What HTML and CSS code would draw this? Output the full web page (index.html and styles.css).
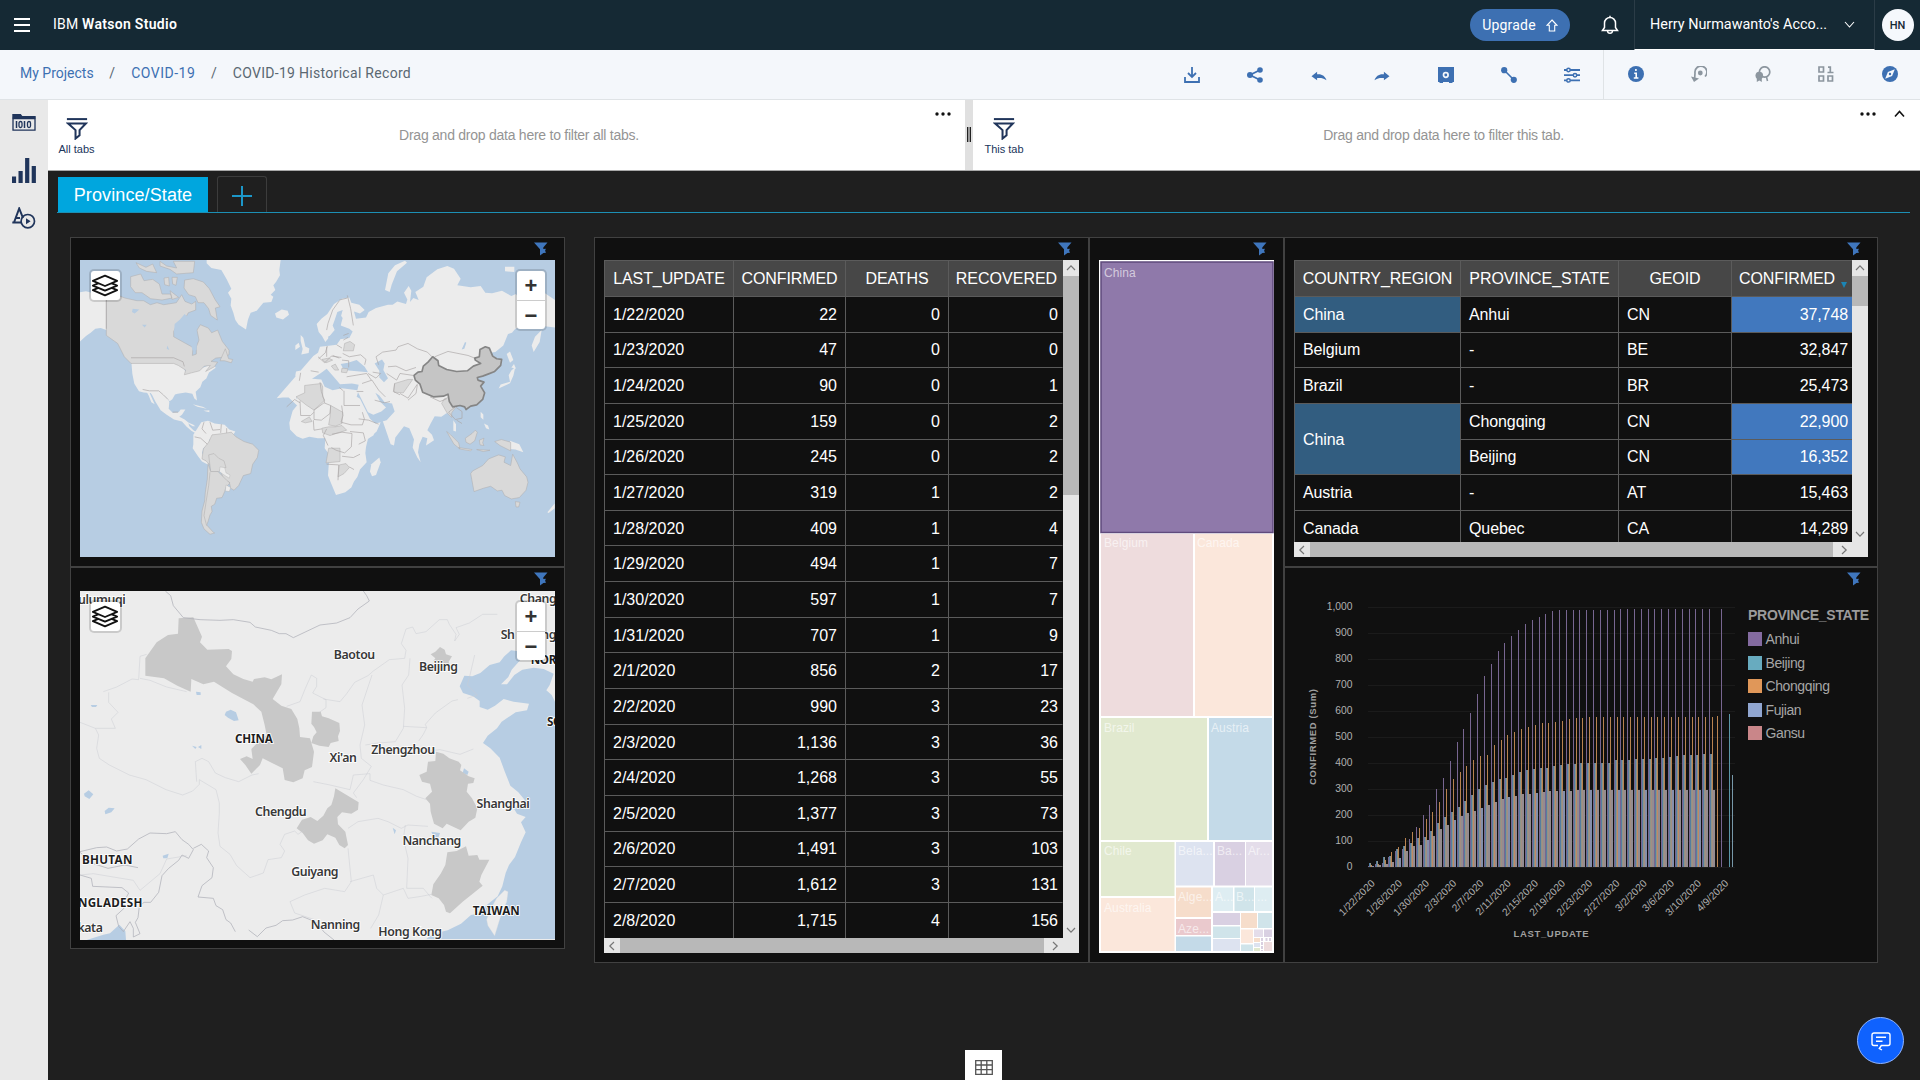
FILE: index.html
```html
<!DOCTYPE html>
<html lang="en">
<head>
<meta charset="utf-8">
<title>IBM Watson Studio</title>
<link rel="stylesheet" href="styles.css">
</head>
<body>
<svg width="0" height="0" class="defs">
  <symbol id="funnel" viewBox="0 0 14 14"><path d="M0 .5h13.5L9.300 5.400v1.600l2.600-.2-.8 2 .9 1.900-2.600.2L6 13.500V7.200Z" fill="currentColor"/></symbol>
  <symbol id="filter" viewBox="0 0 24 24"><path d="M1 1.2h22" stroke="currentColor" stroke-width="2.2"/><path d="M2.4 6h19.2l-6.8 7.2v5.6l-4.4 3.6v-9.2Z" fill="none" stroke="currentColor" stroke-width="2.2"/></symbol>
  <symbol id="layers" viewBox="0 0 30 26"><g fill="#fff" stroke="#111" stroke-width="2" stroke-linejoin="round"><path d="m15 11 13 5.5L15 22 2 16.500Z" transform="translate(0 1)"/><path d="m15 7 13 5.500L15 18 2 12.500Z"/><path d="m15 2 13 5.500L15 13 2 7.500Z"/></g></symbol>
  <symbol id="chev" viewBox="0 0 10 10"><path d="m1 7 4-4.200L9 7" fill="none" stroke="#777" stroke-width="1.200"/></symbol>
</svg>

<header class="top">
  <svg class="burger" viewBox="0 0 16 14"><path d="M0 1h16M0 7h16M0 13h16" stroke="#fff" stroke-width="2"/></svg>
  <div class="brand">IBM <b>Watson Studio</b></div>
  <div class="upgrade"><span>Upgrade</span><svg width="12" height="13" viewBox="0 0 12 13"><path d="m6 1 5 5.300H8.700V12H3.300V6.300H1Z" fill="none" stroke="#fff" stroke-width="1.100"/></svg></div>
  <svg class="bell" width="20" height="21" viewBox="0 0 20 21"><path d="M2.500 15.500 4.500 12.500V8a5.500 5.500 0 0 1 11 0v4.500l2 3Z M10 2.500V.8 M7.500 16c.3 3 4.700 3 5 0" fill="none" stroke="#fff" stroke-width="1.500"/></svg>
  <div class="account"><span>Herry Nurmawanto's Acco...</span><svg width="11" height="8" viewBox="0 0 11 8"><path d="m1 1 4.500 5L10 1" fill="none" stroke="#fff" stroke-width="1.100"/></svg></div>
  <div class="avatar"><span>HN</span></div>
</header>

<nav class="sub">
  <div class="crumbs"><a>My Projects</a><i>/</i><a>COVID-19</a><i>/</i><span>COVID-19 Historical Record</span></div>
  <div class="tools">
    <svg viewBox="0 0 16 16"><path d="M1 10v5h14v-5M8 0v9.500M4 6l4 4 4-4" fill="none" stroke="currentColor" stroke-width="1.800"/></svg>
    <svg viewBox="0 0 16 16"><path d="M13 3 3 8l10 5" fill="none" stroke="currentColor" stroke-width="1.800"/><circle cx="13" cy="3" r="2.800" fill="currentColor"/><circle cx="3" cy="8" r="3" fill="currentColor"/><circle cx="13" cy="13" r="2.800" fill="currentColor"/></svg>
    <svg viewBox="0 0 16 16"><path d="m.5 9.200 5.600-4.400v2.500C11 6.800 14 9 15.500 13.200 12.500 11 10 10.800 6.100 11v2.300Z" fill="currentColor"/></svg>
    <svg viewBox="0 0 16 16"><path d="M15.500 9.200 9.900 4.800v2.500C5 6.800 2 9 .5 13.200c3-2.200 5.500-2.400 9.400-2.200v2.300Z" fill="currentColor"/></svg>
    <svg viewBox="0 0 16 16"><path d="M0 0h16v15h-1.500v1H11v-1H5v1H1.500v-1H0Z" fill="currentColor"/><circle cx="7.800" cy="8" r="2.300" fill="none" stroke="#f4f7fb" stroke-width="1.700"/></svg>
    <svg viewBox="0 0 16 16"><path d="m3 3 10 10" stroke="currentColor" stroke-width="1.600"/><circle cx="3.200" cy="3.200" r="3.100" fill="currentColor"/><circle cx="12.800" cy="12.800" r="3.100" fill="currentColor"/></svg>
    <svg viewBox="0 0 16 16"><path d="M0 3h16M0 8.200h16M0 13.400h16" stroke="currentColor" stroke-width="1.800"/><g fill="#f4f7fb" stroke="currentColor" stroke-width="1.500"><circle cx="4.500" cy="3" r="1.700"/><circle cx="11" cy="8.200" r="1.700"/><circle cx="4.500" cy="13.400" r="1.700"/></g></svg>
  </div>
  <div class="tools right">
    <svg viewBox="0 0 16 16"><circle cx="8" cy="8" r="8" fill="currentColor"/><path d="M7.900 3v2.100M6.200 7.200h2v4.600M5.800 12h4.600" stroke="#fff" stroke-width="1.600" fill="none"/></svg>
    <svg class="off" viewBox="0 0 16 16"><path d="M14 10.500A6 6 0 1 0 4 7c0 3 0 4.500-1 7" fill="none" stroke="currentColor" stroke-width="1.700"/><path d="M0 10.500 3 16l5-3.500Z" fill="currentColor"/><circle cx="9.300" cy="7" r="2.400" fill="currentColor"/></svg>
    <svg class="off" viewBox="0 0 16 16"><circle cx="9.600" cy="6" r="5.200" fill="none" stroke="currentColor" stroke-width="1.700"/><circle cx="4.300" cy="9.600" r="3.800" fill="currentColor"/><path d="M1.800 11.500V16l2.500-1.600L6.800 16v-4.500Z" fill="currentColor"/><path d="m11.500 11 1 4" stroke="currentColor" stroke-width="1.500"/></svg>
    <svg class="off" viewBox="0 0 16 16"><path d="M1 1h4.500v5H1ZM1 10h4.500v5H1ZM10 10h4.500v5H10ZM10 1.200h2.300V6M9.500 6.500h6" fill="none" stroke="currentColor" stroke-width="1.700"/></svg>
    <svg viewBox="0 0 16 16"><circle cx="8" cy="8" r="8" fill="currentColor"/><path d="m12.800 3.200-2.700 6.900-6.900 2.700 2.700-6.900Z" fill="#f4f7fb"/><circle cx="8" cy="8" r="1.200" fill="currentColor"/></svg>
  </div>
</nav>

<div class="main">
  <aside class="side">
    <svg width="24" height="17" viewBox="0 0 24 17"><path d="M1 4.500h22v11.700H1Z" fill="none" stroke="currentColor" stroke-width="1.300"/><path d="M.3 0h8.500l1.500 2H23.700v2.500H.3Z" fill="currentColor"/><path d="M4.500 7v7M12.500 7v7" stroke="currentColor" stroke-width="1.500"/><rect x="7" y="7.500" width="3" height="6" rx="1.500" fill="none" stroke="currentColor" stroke-width="1.300"/><rect x="15.500" y="7.500" width="3" height="6" rx="1.500" fill="none" stroke="currentColor" stroke-width="1.300"/></svg>
    <svg width="24" height="25" viewBox="0 0 24 25"><path d="M2 18.500V25M8.600 13v12M15.200 0v25M21.800 8v17" stroke="currentColor" stroke-width="4.200"/></svg>
    <svg width="24" height="22" viewBox="0 0 24 22"><path d="M2 15.500 7.200 1.500 11 11M.3 15.500h9M4 11h4" fill="none" stroke="currentColor" stroke-width="2"/><circle cx="15.800" cy="14.200" r="6.700" fill="none" stroke="currentColor" stroke-width="1.700"/><path d="m14 11.200 4.600 3-4.600 3Z" fill="currentColor"/></svg>
  </aside>
  <div class="content">
    <div class="filters">
      <div class="ftab all"><div class="fico"><svg><use href="#filter"/></svg><span>All tabs</span></div><p>Drag and drop data here to filter all tabs.</p><div class="fmenu"><svg width="16" height="4"><g fill="#111"><circle cx="2" cy="2" r="1.700"/><circle cx="8" cy="2" r="1.700"/><circle cx="14" cy="2" r="1.700"/></g></svg></div></div>
      <div class="split"><i></i></div>
      <div class="ftab this"><div class="fico"><svg><use href="#filter"/></svg><span>This tab</span></div><p>Drag and drop data here to filter this tab.</p><div class="fmenu"><svg width="16" height="4"><g fill="#111"><circle cx="2" cy="2" r="1.700"/><circle cx="8" cy="2" r="1.700"/><circle cx="14" cy="2" r="1.700"/></g></svg><svg class="caret" width="11" height="8"><path d="m1 6.500 4.500-5 4.500 5" fill="none" stroke="#111" stroke-width="1.600"/></svg></div></div>
    </div>
    <div class="tabs"><div class="tab">Province/State</div><div class="add"><svg width="20" height="20"><path d="M10 0v20M0 10h20" stroke="#1c97c9" stroke-width="2"/></svg></div></div>

    <div class="board">
      <div class="col maps">
        <section class="panel p-world">
          <div class="ptop"><svg><use href="#funnel"/></svg></div>
          <div class="map">
            <svg class="geo" viewBox="60 90 1425 890" preserveAspectRatio="none">
              <rect x="60" y="90" width="1425" height="890" fill="#b7cde3"/>
              <g fill="#ececec" stroke="none">
                <path d="M60 187l18-3 30 8 31 4v104l-17-6-16 2-14 12-14 10-18 16 0-20Z"/>
                <path d="M139 296l14 4 14 10 14 14 8 20-12-6-16-22-22-18Z"/>
                <path d="M213 383h128l14 6 14 6 10 6 2 20-6 4 16 2 12-8 20-4 20-8 14-8 10 14-20 14-8 18-12 10-6 16-14 14 4 26-8-6-6-14-20-4-24 4-8 2-8 14-8 6-10-12-10-6-30-6-28-2-14-4-14-22-6-30Z"/>
                <path d="M248 478l20 4h28l12 10 16 14 4 10-2 20 12 12 18-2 6-8 14 0-10 16-8 6 16 8 10 8 4 12 14 14 12 4-6 4-14-8-14-12-14-16-24-6-22-14-18-14-16-26-10-20-12-16 12 26 8 18-10-6-8-20-8-14Z"/>
                <path d="M440 90h222l-4 30 2 16-12 20-8 10 6 14-14 14 8 6-6 16-24 2-20 24-18 6-8 20-6 30-22-14-10-14-6-22-8-22 2-20-10-18 10-12-14-28-16-28-30-6-14-14Z"/>
                <path d="M645 250l20-12 18 4 4 12-18 14-20-6Z"/>
                <path d="M400 614l14-22 10-16 20-4 20 8 30 4 14 14 18 6-10 16-30 0-24 2-14 6 0 14-18 12-4 14 6 12 12 6 2 18-20-10-12-16-16-24 2-12Z"/>
                <path d="M702 476l28-16 8-8 44 0 6 8 10 22 22 8 20-12 28 4 20 6 2 14 8 22 10 34 20 22 34-4-12 28-26 22-6 24-2 18 4 28-20 22-8 22-10 14-8 18-18 14-28 8-6-14-10-24-8-20 2-30 4-30-16-22 2-30-22 0-26-4-20 6-18-8-20-20-2-20 6-22 4-14 16-20Z"/>
                <path d="M958 682l4 14-14 38-12 4-6-14 4-22Z"/>
                <path d="M708 424l22-4 22 4 4 16-14 14-18 2-16-4-2-16ZM760 378l14-10 6-18 20-2 30-4 10-14 8-28-6-10-2-22 8-30-16 6-8 24-6 16 6 14-10 12-10 14-8 10-10-18-10-12-6-24 14-16 18-14 20-30 24-16 22-4 6 16 24 6 16 16-14 10-18-6 6 22 30-4 8-16 22-12 36-10 14 0 14-10 26 8 4-14-10-20 14-20 8 14-4 34 10-12 16 6-10-24 24-16 10-28 32-24 30-10 20 8 20 30-10 20 40 6 30-4 14 20 20 2 30-8 28 16 14-6 18 30 10 6 10-6v40l-10 24-30 10-10 12-12 4-14 34-24 20-30 4-20 34-16 28-20 14-10 14 18 20-4 20-16-16-4-20-18-6-6 12 20 16-4 34-18 22-20 8-14 10-20-2-12 22-10 20 14 14 6 16-18 12-6 4 4-22-14-4-10 22-4 24 8 30-10-14-14-30 4-24-14-34-16-6-26 34-4 24-10-4-24-70-18-8-8 14 6 20-8 18-34 20-34 16-16-2-20-34-14-32-4-12-6-30-34 0-20-12 4-18-10-14-14 4 0 20-8-14-22-16 0 12 18 22-6 8-34-32-18 0-18 2Z"/>
                <path d="M722 315l8 8 6 26 12 6-2 14-22 4 4-16-6-24ZM706 346l10-8 4 12-14 10ZM975 180l10-50 20-24 30-14 6 6-30 26-16 40-6 22ZM1180 570l8 12 0 22-8-2ZM1262 545l8 8 0 16-8-8ZM1272 580l12 6 4 12-10-4ZM1350 455l-4-20 8-14 12-10-6 26-10 22-34 16 6-12ZM1340 372l10-8 10 26-10 8ZM1354 412l8-10 6 14ZM1445 300l-6 36-18 30-6-20 10-26ZM1350 632l28 10 12 24-24-8-18-2ZM1462 846l22-26v14l-18 14ZM1335 110l28 0 0 16-28-2ZM370 570l30 14 6 4-8 0ZM398 522l30 8 12 6-28-6ZM430 542l18-2v6Z"/>
                <path d="M1455 190l30 20v82l-50-6Z"/>
              </g>
              <g fill="#b7cde3">
                <path d="M868 296l10 8-10 20-34 4-26 4-4-12 22-12 6-20 6-38 10 14-6 22ZM842 402l22-4 26-8 24 20 10 16-50-4-22-2ZM944 400l22-12 8 12-4 20 14 24-12 12-14-14 0-20ZM784 428l16-12 30 34 10 12 36-2 20 4-4 16-46-6-28 6-24-10-10-22-28-2ZM890 500l10 6 30 60 16 14 34-10 24-26-8-24-22-4-16-20-12-8 14 26 18 18-14 12-24 10-16-8-22-44-8-16ZM1205 358l10-22 4 2-6 18ZM1245 440l20-10 12 10-6 18-10-8ZM365 395l20 6 0 24-10-2Z"/>
              </g>
              <g fill="#d9d9d9" stroke="#b0adad" stroke-width="1.600">
                <path d="M139 196l24-4 32 12 36 8 20 0 20 12 20-6 20 6 38-6 16-24 10 20 20 8 12-8 0 26-22 8-10 18-24 18-10 20 0 16 36 20 22 12-2 24 12-4 0-22 8-20-6-30 10-16 24 10 10 14 18-8 14 34 20 26 0 14-22 8-18 2-14 10 20 2-10 14-26 14 14-18-18 2-14 14-24 6-22 6 4-14-22-14-14-6H213l-20-20-20-40-34-24Z"/>
                <path d="M212 140l30-8 10 20 26-4 20 14 8 30 26 0 4 12-30 6-34-4-26-18-20 0-14-18ZM312 144l14-2 2 26-14-4ZM336 142l16 0-4 24-10-4ZM374 150l26-4 30 10 18 20 18 34 14 20-14 4 6 36-20-14-6-20-14-18-18 0-8-18-20-6-14-20ZM228 98l30 14 20-10 12 26-30-4-22-10ZM300 94l20 14 30 6-10-20 64 0-4 34-50 4-20-14-30-10ZM330 182l26 20-20 6ZM496 356l10 30 12 2-4 10-20-6-14 0Z"/>
                <path d="M430 656l16-20 10-22 34-4 24-4 14 14 24 14 26 8 18 18-4 22-14 20-6 28-22 6-14 30-14 14-10-6-4-18-16-6-10-28-34-20-10-10-12-6Z"/>
                <path d="M446 674l16-4 14 14 16 8 6 20-16 2-4 10-26 0Z"/>
                <path d="M444 700l8 24 22 0 26 26 10 8-12 12-4 14-8 18-16 2-6 18-10 6 2 16-6 10-6 20-4 10 20 22 4 2-14 4-18-16-8-20 2-34 8-30 2-26 6-40Z"/>
                <path d="M450 726l-4 40-8 50-6 40 8 30"/>
                <path d="M734 466l50-6 4 10 0 30 6 10-32 30-24-16-30-24 26-12ZM812 526l36 20-2 34-20 8-20-4 4-24ZM786 594l20-4 20 0 20-4 14 14-20 6-30 10-22-8ZM724 574l24-14 8 14-20 4ZM806 654l34 0 0 40-42 4ZM838 704l20-4 10 12-16 18-18 10ZM1004 460l40-12 14 0-14 20-14 20-28-2ZM854 340l16-6 14 10-4 18-30 0ZM1145 520l8-14 12-4 8 20 12 12-10 14 0 14-14-14ZM786 388l20-4 12 6-20 8ZM814 408l12-6 10 18-12 0ZM846 414l18 2-4 12-16-2Z"/>
                <path d="M1160 604l12 10 24 24 4 18-18-14ZM1196 652l40 6-4 4-34-6ZM1216 624l20-14 10-10 6 6-8 26-14 10-12-6ZM1258 630l14-6-4 14 4 8-12-2ZM1304 634l20-6 28 8 0 26-20-10-12-6ZM1250 658l40 2-20 4Z"/>
                <path d="M1232 730l6-8 30-16 18-20 30-12 20 6-4 16 20 10 6-34 14 26 8 18 20 24 4 16-6 24-20 22-24 4-20-10-8-16-14 2-20-14-22 6-28 10Z"/>
                <path d="M1366 814l14 2-4 14-8 0Z"/>
              </g>
              <g fill="#ececec"><path d="M480 710l14 2 4 16 12 6-2 10-16-10-14-10ZM498 764l14 8-4 12-12-2Z" stroke="#aaa"/></g>
              <path d="M213 383h128l14 6 14 6 4 14M248 478l20 4h28l14 12 14 14M338 546l16 0M139 196v100M432 576l-6 20 12 14M450 576l8 24 22-2M484 582l-2 26M500 594l0 14M404 620l18 4 20 18M780 456l4 28 8 24 2 10M852 482v44h48M762 540l30-22 20 8-2 24-26 20-22-2ZM720 512l2 44 30 0 10-10M680 530l24-22 16 10M760 570l2 30 24-4M845 526l4 30-6 20 30 8 34 0 6-18-6-20M896 566l30 4 30 12M870 604l40 4 6 24-20 10M816 612l30-6 30 4-2 40-20 18-26-8-14-8M846 678l34 4 20-10M800 702l36 2-2 46M868 710l14 8M800 596l-10 20 14 30M850 482l-12-10M802 348l-6 20-20 18M830 344l16 10M774 380l20 18 20-20 30 4M800 350v30M848 370l20 10 34-6 16 14-4 16M846 390l20 2 0 20M838 212l-20 28-14 40-4 20M862 196l10 40 8 50M838 210l24-6M850 316l16-6M850 330l14-8M838 384l-20-8M948 380l20-14 40-6 6-10 30-10 28 16 30 10 14 14M948 380l8 24M984 410l24-2 30 14 30-10M980 430l30 20 10-20 40 6M938 426l24 4-14 14-24-14M860 440l60-10 14 20M906 460l30-10 20 30 20 20M890 484l20 0M944 510l30 8 16-4M1004 460l-4 24 20 10M1020 490l24 14 20-30 8-12M1044 510l24-20 4-26M1110 500l30 14 20-8M1124 380l40-16 60 12 20 8M1166 546l20-16 20 14 0 20-20 4ZM1190 570l16 10M722 428l-4 24M752 422l24 4" fill="none" stroke="#aaa6a6" stroke-width="2"/>
              <path d="M1062 436L1074 426 1086 424 1090 408 1104 396 1118 380 1134 392 1136 406 1160 418 1190 424 1222 422 1240 408 1262 400 1246 390 1244 384 1258 380 1260 358 1276 350 1288 354 1298 378 1310 386 1325 388 1322 406 1304 424 1284 432 1268 438 1252 442 1254 450 1272 456 1262 468 1274 488 1268 508 1250 524 1232 528 1218 538 1214 530 1200 526 1178 530 1168 514 1164 492 1150 498 1120 500 1088 486 1080 462 1066 450Z" fill="#c5c5c5" stroke="#858585" stroke-width="5" stroke-linejoin="round"/>
              <path d="M218 236l20 2-14 12-8-4ZM246 284l14 0-6 8ZM322 346l6 14-8-4ZM344 282l16-14 14-16 10 10 24 14 2 52 0 32-12 2-6-22-30-14-20-20Z" fill="#b7cde3"/>
            </svg>
            <div class="layers"><svg><use href="#layers"/></svg></div>
            <div class="zoom"><b>+</b><b>−</b></div>
          </div>
        </section>
        <section class="panel p-china">
          <div class="ptop"><svg><use href="#funnel"/></svg></div>
          <div class="map">
            <svg class="geo" viewBox="60 78 1425 1047" preserveAspectRatio="none">
              <rect x="60" y="78" width="1425" height="1047" fill="#ececec"/>
              <g fill="#b7cde3">
                <path d="M1485 410l-10-20-16-14 10-16 12-34-30-14-30-4-34 6-24 16-22 28-18 0 22-22 10-22 32-36 0-18-34-4-20 18-14 18-30 8-28 24-24 10-24-2-6 14-8 18 10 20 30 10 20 14 0 18 24 8 22-12 26-20 30 8 46 6-6 20-34 6-42 28-14 20-28 22-14 22 22 16 28 28 16 44 16 40 24 20 20 24-34 24 10 16 26 10-14 16 14 30-14 30-18 44-18 24-10 24-10 40-14 30-30 24-30 28-20 4-30 26-40 20-44 10-20 16h450Z"/>
                <path d="M80 1125l50-16 20-4 28-26 18 20 2 26ZM498 440l14-6 16 8 8 24-14 2-18-10-10-8ZM408 380l14 2 0 8-12 0ZM92 420l20 0-4 6-12 0ZM72 686l14-10 14 12-12 14-14-8ZM134 738l12-10 18 2-10 12-18 6ZM396 542l14 4-4 6ZM414 546l10-6 0 12ZM308 872l18-6-4 14-12 0ZM1212 610l14 10-4 10-14-6ZM1114 800l26 4-4 12-14 2ZM998 788l10 8-4 12Z"/>
              </g>
              <path d="M1334 976l10 4-4 30-20 50-16 52-20-30-4-18 10-28 20-36Z" fill="#ececec" stroke="#ddd"/>
              <g fill="#c8c8c8">
                <path d="M356 160L400 157 426 215 420 232 442 254 506 252 516 258 514 282 498 304 520 328 550 342 578 350 582 342 614 337 634 343 666 328 664 358 638 402 664 422 694 432 712 462 718 490 720 516 750 520 762 560 756 606 734 616 728 640 700 652 674 645 668 610 608 580 600 600 574 626 556 600 540 582 560 574 578 582 574 552 600 526 620 510 614 480 604 440 580 418 516 384 462 350 430 358 394 342 392 380 352 362 312 340 256 332 256 280 290 232 324 210 354 206Z"/>
                <path d="M756 440l26 0 4 14 20 6 32 14 2 24-6 16 2 14-24 6-6 12-28-4-24-8 6-20 10-12-8-16-8-10Z"/>
                <path d="M1112 268l14-8 14-14 14 8 4 14 18 6-10 16 4 12-22-6-14 4-14-12 6-8Z"/>
                <path d="M1128 560L1150 566 1168 580 1196 590 1204 600 1200 616 1226 634 1244 640 1240 654 1224 656 1220 680 1236 700 1252 730 1246 758 1226 770 1202 796 1160 776 1148 790 1122 776 1112 740 1110 716 1096 700 1116 680 1110 656 1086 650 1078 630 1100 620 1104 590 1126 588Z"/>
                <path d="M826 670L856 688 896 712 894 734 874 746 846 742 832 756 834 778 856 800 864 840 854 850 838 840 826 818 802 808 788 826 762 836 744 826 728 804 710 790 726 764 752 756 772 768 790 752 802 730 814 720 822 694Z"/>
                <path d="M1162 862L1190 858 1218 844 1226 872 1252 870 1258 884 1288 884 1264 930 1258 950 1268 962 1240 985 1208 1010 1170 1045 1158 1040 1152 1020 1136 1000 1114 990 1120 958 1142 926 1156 900Z"/>
              </g>
              <g fill="none" stroke="#aeb0b8" stroke-width="2.200" stroke-linejoin="round">
                <path d="M316 78l16 14 8 30 30 36 50 6 60 2 40-2 50 8 16 14 48 10 24 10 20 0 22 12 80-38 50-6 40-16 24-26 34-24-8-16-10-14M60 860l50-12 30-2 30 12 32-6 34-30 34-18 50 2 26-6 20 24 20 14 14 16-14 26-20-10-10 16-30 24-20 22-10 50-24 30-20 0-14 12-4 34-8 14 14 34-20 10 0-26-10-20-20 30-14-16-8-32 24-22 0-20 14-26-20-16-88-4-4-24-54-16M60 862l40 34 44 14 50-10 40 8M400 850l24-12 22 20-6 20 20 30-4 30-30 24-12 34 46 4 8 22 20 12 10 30 14 10 14 26M566 1095l26 20 26-26 30-8 20-14 30-2 30-10 40 16 24 30 30 24"/>
              </g>
              <g fill="none" stroke="#c9cbd1" stroke-width="1.400" stroke-linejoin="round">
                <path d="M130 380l40-14 46-24 20 2 4-70 20-6M146 382l0 30 28 30-20 20 12 28-60 0-46-18M106 490l10 20-6 40 8 30 30 20 60 30 50 14 60 30 50 16 30-12 20-20 0-14 50 30 10 40 0 30-4 60 6 40 30 24 20 34 40 36 40-14 14-40 40-6 10-20-14-20 14-30 30-10 10 10 20-14M410 650l-4-60 20-10 20 10 20 34 30 14 40 12 40-20 20-4M240 340l30 6 50 20 60 14M680 424l40-14 16-40 18-40 16 10 0 24-12 20 40 20 0 24-20 14M790 402l50 8 20-24 24-34 40-20 16-14 48-34 46-4 4-24-14-20 14-44 20-6 10 20 30-6 40-36 24 0 6 14 20 30-4 20 14-20-10-20 40-14 40-26 44 0M936 330l-10 30-20 60 8 60-14 60 4 40 30 24-24 40-30 40 10 14M1050 280l-4 50-20 30 8 70-4 60-24 40-50 4-40 6M1030 484l70 4-10 20-14 20M1100 488l-4-10 30-34 50-36 18-4M1244 270l-14 60-8 30 30 30-30 10M1090 560l50-6 60 14 40-16M880 630l50-4 0 20 40 14 60 14 40 20 30 10M760 650l50 10 60 14 10-44M864 790l30-20 60-10 30 10 40 20 20-10 60 4M1036 780l-6 40 14 60-4 90 50 0 20 24 6 6M864 850l10 100-20 30-60-10-60 20-44 20 14 34 60 20M870 950l70-20 10 40 20 20-14 60-24 40M970 990l60-20 14 30 40-6 30-6M60 930l40-4 120 20 20 30 60-50 20-44 60-10"/>
              </g>
              <g class="city" text-anchor="middle">
                <text x="125" y="117">ulumuqi</text><text x="1434" y="113">Chang</text><text x="1343" y="222">Sh</text><text x="1466" y="222">ng</text>
                <text x="883" y="281">Baotou</text><text x="1135" y="319">Beijing</text><text x="1029" y="568">Zhengzhou</text><text x="849" y="590">Xi'an</text>
                <text x="1329" y="730">Shanghai</text><text x="662" y="754">Chengdu</text><text x="1115" y="841">Nanchang</text><text x="764" y="932">Guiyang</text>
                <text x="826" y="1091">Nanning</text><text x="1050" y="1114">Hong Kong</text><text x="90" y="1102">kata</text>
                <g class="nation"><text x="581" y="533" textLength="112">CHINA</text><text x="141" y="897" textLength="150">BHUTAN</text><text x="150" y="1027" textLength="192">NGLADESH</text><text x="1308" y="1051" textLength="140">TAIWAN</text><text x="1450" y="297">NOR</text><text x="1483" y="484">SO</text></g>
              </g>
            </svg>
            <div class="layers"><svg><use href="#layers"/></svg></div>
            <div class="zoom"><b>+</b><b>−</b></div>
          </div>
        </section>
      </div>

      <section class="panel p-table">
        <div class="ptop"><svg><use href="#funnel"/></svg></div>
        <div class="scroller">
          <div class="grid g1">
            <b>LAST_UPDATE</b><b>CONFIRMED</b><b>DEATHS</b><b>RECOVERED</b>
            <span>1/22/2020</span><span>22</span><span>0</span><span>0</span>
            <span>1/23/2020</span><span>47</span><span>0</span><span>0</span>
            <span>1/24/2020</span><span>90</span><span>0</span><span>1</span>
            <span>1/25/2020</span><span>159</span><span>0</span><span>2</span>
            <span>1/26/2020</span><span>245</span><span>0</span><span>2</span>
            <span>1/27/2020</span><span>319</span><span>1</span><span>2</span>
            <span>1/28/2020</span><span>409</span><span>1</span><span>4</span>
            <span>1/29/2020</span><span>494</span><span>1</span><span>7</span>
            <span>1/30/2020</span><span>597</span><span>1</span><span>7</span>
            <span>1/31/2020</span><span>707</span><span>1</span><span>9</span>
            <span>2/1/2020</span><span>856</span><span>2</span><span>17</span>
            <span>2/2/2020</span><span>990</span><span>3</span><span>23</span>
            <span>2/3/2020</span><span>1,136</span><span>3</span><span>36</span>
            <span>2/4/2020</span><span>1,268</span><span>3</span><span>55</span>
            <span>2/5/2020</span><span>1,377</span><span>3</span><span>73</span>
            <span>2/6/2020</span><span>1,491</span><span>3</span><span>103</span>
            <span>2/7/2020</span><span>1,612</span><span>3</span><span>131</span>
            <span>2/8/2020</span><span>1,715</span><span>4</span><span>156</span>
          </div>
          <div class="vbar"><svg class="up"><use href="#chev"/></svg><i class="t1"></i><svg class="down"><use href="#chev"/></svg></div>
          <div class="hbar"><svg class="left"><use href="#chev"/></svg><i></i><svg class="rightc"><use href="#chev"/></svg></div>
        </div>
      </section>

      <section class="panel p-tree">
        <div class="ptop"><svg><use href="#funnel"/></svg></div>
        <svg class="tree" viewBox="1099 260 175 693">
          <rect x="1099" y="260" width="175" height="693" fill="#fff"/>
          <rect x="1101" y="262" width="172" height="270.500" fill="#8f79aa" stroke="#5f4a7c" stroke-width="1.500"/>
          <g><rect x="1101" y="534" width="92" height="182" fill="#eedcdd"/><rect x="1195" y="534" width="77" height="182" fill="#fbe7db"/>
          <rect x="1101" y="718" width="106" height="122" fill="#e1e9cf"/><rect x="1209" y="718" width="63" height="122" fill="#c4dae8"/>
          <rect x="1101" y="842" width="73.500" height="54" fill="#e1e9cf"/><rect x="1101" y="898" width="73.500" height="53" fill="#fbe7db"/>
          <rect x="1176" y="842" width="37" height="43.500" fill="#dde3f0"/><rect x="1215" y="842" width="30" height="43.500" fill="#d9d0e2"/><rect x="1246" y="842" width="26" height="43.500" fill="#e4ddea"/>
          <rect x="1176" y="887.500" width="35" height="29.500" fill="#f6ddcb"/><rect x="1176" y="919" width="35" height="16" fill="#eac9cd"/><rect x="1176" y="936.500" width="35" height="14.500" fill="#c4dae8"/>
          <rect x="1213" y="887.500" width="20" height="23.500" fill="#deedf2"/><rect x="1234.500" y="887.500" width="19.500" height="23.500" fill="#d0e4ea"/><rect x="1255" y="887.500" width="17" height="23.500" fill="#deedf2"/>
          <rect x="1213" y="913" width="27" height="12" fill="#d9d0e2"/><rect x="1213" y="926.500" width="27" height="11.500" fill="#d0e4ea"/><rect x="1213" y="939" width="27" height="12" fill="#dde3f0"/>
          <rect x="1241" y="913" width="16" height="15" fill="#f6ddcb"/><rect x="1258" y="913" width="14" height="15" fill="#d0e4ea"/><rect x="1241" y="929.500" width="12" height="13.500" fill="#fbe7db"/><rect x="1241" y="944.500" width="12" height="6.500" fill="#d0e4ea"/>
          <rect x="1254" y="929.500" width="9" height="7.500" fill="#e4ddea"/><rect x="1264" y="929.500" width="8" height="7.500" fill="#d9d0e2"/><rect x="1254" y="938" width="6" height="4" fill="#f6ddcb"/><rect x="1254" y="943" width="6" height="4" fill="#dde3f0"/><rect x="1254" y="948" width="6" height="3" fill="#e1e9cf"/><rect x="1264" y="942" width="8" height="9" fill="#eedcdd"/><path d="M1262 938v13M1266.500 938v3M1270 938v3" stroke="#d9cfe0" stroke-width="2" stroke-dasharray="3 1"/></g>
          <g class="tl"><text x="1104" y="277">China</text><text x="1104" y="547">Belgium</text><text x="1197" y="547">Canada</text><text x="1104" y="732">Brazil</text><text x="1211" y="732">Austria</text><text x="1104" y="855">Chile</text><text x="1104" y="912">Australia</text><text x="1178" y="855">Bela...</text><text x="1217" y="855">Ba...</text><text x="1248" y="855">Ar...</text><text x="1178" y="901">Alge...</text><text x="1178" y="933">Aze...</text><text x="1215" y="901">A...</text><text x="1236" y="901">B...</text><text x="1257" y="901">...</text></g>
        </svg>
      </section>

      <div class="col last">
        <section class="panel p-region">
          <div class="ptop"><svg><use href="#funnel"/></svg></div>
          <div class="scroller">
            <div class="grid g2">
              <b>COUNTRY_REGION</b><b>PROVINCE_STATE</b><b>GEOID</b><b class="sorted">CONFIRMED<i></i></b>
              <span class="hi">China</span><span>Anhui</span><span>CN</span><span class="num hv">37,748</span>
              <span>Belgium</span><span>-</span><span>BE</span><span class="num">32,847</span>
              <span>Brazil</span><span>-</span><span>BR</span><span class="num">25,473</span>
              <span class="hi two">China</span><span>Chongqing</span><span>CN</span><span class="num hv">22,900</span>
              <span>Beijing</span><span>CN</span><span class="num hv">16,352</span>
              <span>Austria</span><span>-</span><span>AT</span><span class="num">15,463</span>
              <span>Canada</span><span>Quebec</span><span>CA</span><span class="num">14,289</span>
            </div>
            <div class="vbar"><svg class="up"><use href="#chev"/></svg><i class="t2"></i><svg class="down"><use href="#chev"/></svg></div>
            <div class="hbar"><svg class="left"><use href="#chev"/></svg><i></i><svg class="rightc"><use href="#chev"/></svg></div>
          </div>
        </section>
        <section class="panel p-chart">
          <div class="ptop"><svg><use href="#funnel"/></svg></div>
          <svg class="chart" viewBox="1285 591 592 370">
            <g id="lines" stroke="#1b1b1b"></g>
            <g id="bars" shape-rendering="crispEdges"></g>
            <g id="ylabels" class="ax" text-anchor="end"></g>
            <g id="xlabels" class="ax" text-anchor="end"></g>
            <text class="at" transform="translate(1316 737) rotate(-90)" text-anchor="middle" textLength="96">CONFIRMED (Sum)</text>
            <text class="at" x="1551" y="937" text-anchor="middle" textLength="75">LAST_UPDATE</text>
            <text class="lt" x="1748" y="620" textLength="121">PROVINCE_STATE</text>
            <g><rect x="1748" y="632" width="14" height="14" fill="#846ba0"/><rect x="1748" y="656" width="14" height="14" fill="#68abbf"/><rect x="1748" y="679" width="14" height="14" fill="#e09759"/><rect x="1748" y="703" width="14" height="14" fill="#91a6d0"/><rect x="1748" y="726" width="14" height="14" fill="#c98689"/></g>
            <g class="ll"><text x="1765.500" y="643.500">Anhui</text><text x="1765.500" y="667.500">Beijing</text><text x="1765.500" y="690.500">Chongqing</text><text x="1765.500" y="714.500">Fujian</text><text x="1765.500" y="737.500">Gansu</text></g>
          </svg>
        </section>
      </div>
    </div>
  </div>
</div>
<div class="sheet"><svg width="18" height="15" viewBox="0 0 18 15"><path d="M.7.7h16.600v13.600H.7ZM.7 5h16.600M.7 9.700h16.600M6.200 1v13M11.800 1v13" fill="none" stroke="#555" stroke-width="1.300"/></svg></div>
<div class="chat"><svg width="20" height="20" viewBox="0 0 20 20"><path d="M11 18.500 8.300 17l2-3H17a2 2 0 0 0 2-2V3.500a2 2 0 0 0-2-2H3a2 2 0 0 0-2 2V12a2 2 0 0 0 2 2h4M5 5.700h10M5 9.700h6.500" transform="translate(0 .5)" fill="none" stroke="#fff" stroke-width="1.400"/></svg></div>
<script src="chart.js"></script>
</body>
</html>
```
FILE: styles.css
```css
* { box-sizing: border-box; }
body { margin: 0; width: 1920px; height: 1080px; overflow: hidden; display: flex; flex-direction: column; position: relative; background: #1f1f1f; font-family: "Liberation Sans", Arial, sans-serif; }
svg { display: block; flex: none; }
.defs { position: absolute; }
.top { height: 50px; background: #152934; display: flex; align-items: center; color: #fff; font-family: Roboto, sans-serif; font-size: 14px; flex: none; }
.burger { width: 16px; height: 14px; margin-left: 14px; }
.brand { margin-left: 23px; margin-bottom: 2px; letter-spacing: .2px; }
.brand b { font-weight: 600; letter-spacing: .3px; }
.upgrade { margin-left: auto; width: 100px; height: 32px; border-radius: 16px; background: #3d70b2; display: flex; align-items: center; justify-content: center; gap: 10px; font-size: 14px; letter-spacing: .2px; }
.bell { margin: 0 14px 0 30px; }
.account { width: 241px; height: 50px; border-left: 1px solid #2b3c47; border-right: 1px solid #2b3c47; border-bottom: 1px solid #fff; display: flex; align-items: center; justify-content: space-between; padding: 0 19px 0 15px; font-size: 14.400px; }
.avatar { width: 45px; display: flex; justify-content: center; }
.avatar span { width: 32px; height: 32px; border-radius: 50%; background: #f5f8fc; color: #152934; font-size: 11px; font-weight: 500; display: flex; align-items: center; justify-content: center; }

.sub { height: 50px; flex: none; background: #f4f7fb; border-bottom: 1px solid #dfe3e6; display: flex; align-items: center; }
.crumbs { flex: 1; padding-left: 20px; margin-bottom: 3px; display: flex; font: 14px Roboto, sans-serif; color: #5a6872; letter-spacing: .3px; }
.crumbs a { color: #3d70b2; letter-spacing: 0; }
.crumbs a:nth-of-type(2) { letter-spacing: .5px; }
.crumbs i { width: 37.500px; text-align: center; font-style: normal; }
.tools { display: flex; gap: 47.400px; padding-right: 23px; color: #3d70b2; }
.tools svg { width: 16px; height: 16px; }
.tools.right { border-left: 1px solid #dfe3e6; height: 49px; align-items: center; padding: 0 22.500px 2px 23.500px; }
.off { color: #8c969f; }

.main { flex: 1; display: flex; min-height: 0; }
.side { width: 48px; background: #e9e9e9; color: #20355b; display: flex; flex-direction: column; align-items: center; padding-top: 14px; gap: 27px; }
.side svg:nth-child(3) { margin-top: -3px; }
.content { flex: 1; display: flex; flex-direction: column; }
.filters { height: 71px; background: #fff; border-bottom: 1px solid #a8a8a8; display: flex; }
.ftab { display: flex; }
.ftab.all { width: 917px; }
.ftab.this { flex: 1; }
.fico { width: 57px; padding-top: 18px; display: flex; flex-direction: column; align-items: center; color: #20355b; font-size: 11px; }
.this .fico { width: 62px; }
.fico svg { width: 22px; height: 22px; margin-bottom: 3px; }
.ftab p { flex: 1; margin: 0; text-align: center; line-height: 70px; font-size: 14px; color: #949494; letter-spacing: -.25px; }
.fmenu { width: 30px; padding-top: 12px; display: flex; gap: 18px; }
.all p { padding-right: 2px; }
.this p { padding-right: 8px; }
.this .fmenu { width: 60px; padding-left: 0; }
.caret { margin-top: -2px; }
.split { width: 8px; background: #e0e0e0; padding: 27px 0 0 2px; }
.split i { display: block; width: 4px; height: 15px; border: solid #222; border-width: 0 1px; background: #999; }

.tabs { height: 42px; margin: 0 10px 0 9px; border-bottom: 1px solid #1c8fb4; display: flex; align-items: flex-end; }
.tab { margin-left: 1px; width: 150px; height: 35px; background: #00a6de; color: #fff; font-size: 18px; letter-spacing: .1px; line-height: 36px; text-align: center; }
.add { margin-left: 9px; width: 50px; height: 36px; border: 1px solid #3c3c3c; border-bottom: 0; border-radius: 3px 3px 0 0; display: flex; align-items: center; justify-content: center; padding-top: 3px; }

.board { display: flex; align-items: flex-start; padding: 24px 0 0 22px; }
.col { display: flex; flex-direction: column; }
.maps { width: 495px; margin-right: 29px; }
.panel { background: #101010; border: 1px solid #414141; display: flex; flex-direction: column; padding: 0 9px; }
.ptop { height: 22px; flex: none; display: flex; justify-content: flex-end; padding: 4px 7px 0 0; color: #3f76bd; }
.ptop svg { width: 14px; height: 14px; }
.p-world { height: 330px; }
.p-china { height: 382px; }
.p-china .ptop, .p-chart .ptop { height: 23px; }
.map { position: relative; width: 475px; height: 297px; overflow: hidden; }
.p-china .map { height: 349px; }
.geo { width: 100%; height: 100%; }
.layers { position: absolute; left: 9px; top: 9px; width: 33px; height: 33px; background: #fff; border: 2px solid rgba(0,0,0,.14); background-clip: padding-box; border-radius: 5px; }
.layers svg { width: 28px; height: 26px; margin: 2px 0 0 0; }
.zoom { position: absolute; right: 8px; top: 9px; width: 32px; height: 62px; background: #fff; border: 2px solid rgba(0,0,0,.14); background-clip: padding-box; border-radius: 5px; display: grid; grid-template-rows: 1fr 1fr; font-size: 22px; color: #333; text-align: center; line-height: 29px; }
.zoom b + b { border-top: 1px solid #ccc; }
.city { font: 600 37px "Noto Sans", sans-serif; fill: #383838; stroke: #fff; stroke-width: 5px; paint-order: stroke; letter-spacing: -1.200px; }
.nation { font-weight: 700; fill: #1d1d1d; font-size: 35px; }

.p-table { width: 495px; height: 726px; }
.scroller { display: grid; grid-template: minmax(0, 1fr) 15px / minmax(0, 1fr) 16px; height: 693px; background: #e6e6e6; }
.grid { display: grid; background: #101010; overflow: hidden; color: #fff; font-size: 16px; grid-template-rows: 37px; grid-auto-rows: 35.650px; border-left: 1px solid #5b5b5b; }
.grid > * { display: flex; align-items: center; border-right: 1px solid #5b5b5b; border-bottom: 1px solid #5b5b5b; padding: 1px 8px 0; }
.grid > b { font-weight: 400; background: #474747; border-top: 1px solid #5b5b5b; justify-content: center; padding: 0; letter-spacing: -.1px; }
.g1 { grid-template-columns: 129px 112px 103px 114px; }
.g1 span:not(:nth-child(4n+1)) { justify-content: flex-end; }
.g1 span:nth-child(4n) { padding-right: 4px; }
.g1 > b:nth-child(4) { padding-left: 2px; letter-spacing: 0; }
.g1 > :nth-child(4n), .g2 > .sorted { border-right-color: transparent; }
.p-region .scroller { height: 297px; width: 574px; }
.g2 { grid-template-columns: 166px 158px 113px 121px; letter-spacing: -.1px; }
.g2 .two { grid-row: span 2; }
.hi { background: #325d80; }
.hv { background: #4178be; }
.g2 > .num { justify-content: flex-end; padding-right: 5px; border-right: 0; }
.grid .sorted { justify-content: flex-start; padding-left: 7px; }
.sorted i { width: 0; border: solid transparent; border-width: 6px 3.500px 0; border-top-color: #1b85b5; margin: 12px 0 0 6px; }
.vbar { display: flex; flex-direction: column; align-items: center; }
.vbar svg, .hbar svg { width: 10px; height: 10px; }
.vbar .up { margin: 3px 0; }
.vbar i { width: 16px; background: #b8b8b8; }
.t1 { height: 219px; }
.t2 { height: 30px; }
.down { margin-top: auto; margin-bottom: 3px; transform: rotate(180deg); }
.hbar { display: flex; align-items: center; }
.hbar i { flex: 1; height: 15px; background: #b8b8b8; }
.left { margin: 0 3px; transform: rotate(-90deg); }
.rightc { margin: 0 3px 0 6px; transform: rotate(90deg); }

.p-tree { width: 195px; height: 726px; }
.tree { width: 175px; height: 693px; }
.tl { font-size: 12px; fill: #fff; fill-opacity: .62; letter-spacing: .1px; }
.last { width: 594px; }
.p-region { height: 330px; }
.p-chart { height: 396px; padding: 0; }
.p-chart .ptop, .p-region .ptop { padding-right: 16px; }
.p-region .ptop { padding-right: 7px; }
.chart { width: 592px; height: 370px; }
.ax { font-size: 10.300px; fill: #b0b0b0; }
.at { font-size: 9.500px; font-weight: 700; fill: #a0a0a0; }
.lt { font-size: 14px; font-weight: 700; fill: #9b9b9b; }
.ll { font-size: 14px; fill: #a6a6a6; letter-spacing: -.4px; }

.sheet { position: absolute; left: 965px; top: 1050px; width: 37px; height: 30px; background: #fff; display: flex; align-items: center; justify-content: center; padding-top: 4px; }
.chat { position: absolute; left: 1857px; top: 1017px; width: 47px; height: 47px; border-radius: 50%; background: #0f62fe; border: 1px solid #8fb4ff; display: flex; align-items: center; justify-content: center; }
```
FILE: chart.js
```js
const NS = 'http://www.w3.org/2000/svg';
const X0 = 1368, STEP = 6.82, Y0 = 866.7, K = 0.26;

const anhui = [1,9,15,39,60,70,106,152,200,237,297,340,408,480,530,591,665,733,779,830,860,889,910,934,950,962,973,982,986,987,988,989,989,989,989,989,989,990];
const beijing = [14,22,36,41,68,80,91,111,114,139,168,191,212,228,253,274,297,315,326,337,342,352,366,372,375,380,381,387,393,395,396,399,399,399,400,400,410,410,411,413,414,414,418,418,422,426,428,428,429,435,435];
const chongqing = [6,9,27,57,75,110,132,147,182,211,247,300,337,366,389,411,426,428,468,486,505,518,529,537,544,551,553,555,560,567,572,573,575,576];
const fujian = [1,5,10,18,35,59,80,84,101,120,144,159,179,194,205,215,224,239,250,261,267,272,279,281,285,287,290,292,293,293,294,294,296];

function add(parent, tag, attrs, text) {
  const el = document.createElementNS(NS, tag);
  for (const k in attrs) el.setAttribute(k, attrs[k]);
  if (text) el.textContent = text;
  document.getElementById(parent).appendChild(el);
}
function bar(x, width, value, fill) {
  add('bars', 'rect', { x, y: Y0 - value * K, width, height: value * K, fill });
}
const at = (list, i) => list[Math.min(i, list.length - 1)];

for (let v = 0; v <= 1000; v += 100) {
  const y = Y0 - v * K;
  add('lines', 'line', { x1: X0, x2: 1735, y1: Math.round(y) + 0.5, y2: Math.round(y) + 0.5 });
  add('ylabels', 'text', { x: 1352.5, y: y + 3.5 }, v.toLocaleString('en-US'));
}

for (let i = 0; i < 51; i++) {
  const x = Math.round(X0 + i * STEP);
  const a = at(anhui, i), b = at(beijing, i), c = at(chongqing, i), f = at(fujian, i);
  bar(x, 1, a, '#786691');
  bar(x + 1, 1, b, '#557da0');
  bar(x + 2, 1, b, '#8f9489');
  bar(x + 3, 1, c, '#b9834f');
  bar(x + 3, 1, f, i % 3 ? '#a28e82' : '#c08963');
  bar(x + 4, 2, f, i % 4 ? '#948c90' : '#858fab');
}
bar(1717, 1, 579, '#b9834f');
bar(1721, 1, 990, '#786691');
bar(1729, 1, 588, '#5b97a8');
bar(1732, 1, 354, '#7798a9');

['1/22/2020', '1/26/2020', '1/30/2020', '2/3/2020', '2/7/2020', '2/11/2020', '2/15/2020', '2/19/2020', '2/23/2020', '2/27/2020', '3/2/2020', '3/6/2020', '3/10/2020', '4/9/2020'].forEach((label, i) => {
  add('xlabels', 'text', { transform: `translate(${1375.5 + i * 27.2} 884) rotate(-45)` }, label);
});
```
